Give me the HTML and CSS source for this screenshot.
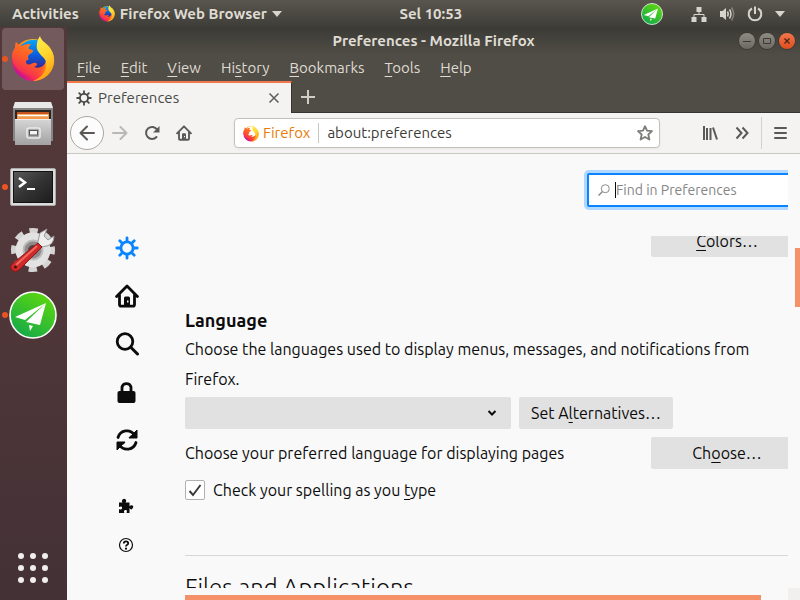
FILE: index.html
```html
<!DOCTYPE html>
<html lang="en">
<head>
<meta charset="utf-8">
<meta name="viewport" content="width=device-width, initial-scale=1">
<title>Preferences - Mozilla Firefox</title>
<link rel="stylesheet" href="styles.css">
</head>
<body>
<svg class="defs" aria-hidden="true">
  <defs>
    <linearGradient id="fx-body" x1="0.85" y1="0.1" x2="0.15" y2="0.85">
      <stop offset="0" stop-color="#ffd93b"/><stop offset="0.3" stop-color="#ffa516"/><stop offset="0.55" stop-color="#ff6a20"/><stop offset="0.8" stop-color="#fb2f4b"/><stop offset="1" stop-color="#c8109a"/>
    </linearGradient>
    <linearGradient id="fx-face" x1="0.7" y1="0" x2="0.1" y2="1">
      <stop offset="0" stop-color="#ff8a16"/><stop offset="0.5" stop-color="#ff5a2a"/><stop offset="1" stop-color="#ee1a66"/>
    </linearGradient>
    <linearGradient id="fx-tail" x1="0.2" y1="0" x2="0.6" y2="1">
      <stop offset="0" stop-color="#fff14f"/><stop offset="0.5" stop-color="#ffd52e"/><stop offset="1" stop-color="#ff9a10"/>
    </linearGradient>
    <linearGradient id="fx-globe" x1="0.5" y1="0" x2="0.5" y2="1">
      <stop offset="0" stop-color="#0aa5f5"/><stop offset="0.5" stop-color="#0a5fe0"/><stop offset="1" stop-color="#3a1d80"/>
    </linearGradient>
    <linearGradient id="plane-bg" x1="0.8" y1="0" x2="0.2" y2="1">
      <stop offset="0" stop-color="#5fd90c"/><stop offset="1" stop-color="#12a84c"/>
    </linearGradient>
    <linearGradient id="metal" x1="0" y1="0" x2="0" y2="1">
      <stop offset="0" stop-color="#d6d6d6"/><stop offset="1" stop-color="#a2a2a2"/>
    </linearGradient>
    <linearGradient id="screen" x1="0" y1="0" x2="1" y2="1">
      <stop offset="0" stop-color="#5a5a5a"/><stop offset="0.5" stop-color="#333"/><stop offset="1" stop-color="#1d1d1d"/>
    </linearGradient>
  </defs>
  <symbol id="firefox" viewBox="0 0 44 46">
    <circle cx="22" cy="24" r="21" fill="url(#fx-body)"/>
    <path class="globe" d="M9 11C13 5 22 2 28 5L35 17C37 25 33 33 24 34C15 35 9 28 8 20Z"/>
    <path d="M5 6C7 8 9 10 11 10C14 8 17 8 20 8C18 10 17 12 18 13C20 14 22 13 22 15C22 17 18 18 17 20C17 22 18 23 17 24C15 24 14 26 16 28C19 30 22 26 25 27C27 28 26 30 23 31C26 33 32 31 34 28C32 38 23 42 14 38C5 34 0 26 1 18C2 15 3 13 4 12C4 10 4 8 5 6Z" fill="url(#fx-face)"/>
    <path d="M29 0C30 4 34 7 38 11C42 16 45 23 42 31C39 40 30 45 22 45C31 42 37 34 35 26C34 21 28 19 26 13C25 8 27 3 29 0Z" fill="url(#fx-tail)"/>
  </symbol>
  <symbol id="plane" viewBox="0 0 48 48">
    <circle cx="24" cy="24" r="23" fill="url(#plane-bg)" stroke="#fff" stroke-width="1.6"/>
    <path d="M37 12L6 26L16 29ZM37 12L17 31L31 34ZM20 34L24 35L21 40Z" fill="#fff"/>
  </symbol>
  <symbol id="gear" viewBox="0 0 24 24">
    <g fill="none" stroke="currentColor" stroke-linecap="round">
      <circle cx="12" cy="12" r="6.1" stroke-width="2.8"/>
      <path stroke-width="2.8" d="M12 1.8V5M12 19V22.2M1.8 12H5M19 12H22.2M4.8 4.8L7 7M17 17L19.2 19.2M19.2 4.8L17 7M7 17L4.8 19.2"/>
    </g>
  </symbol>
  <symbol id="home" viewBox="0 0 24 24">
    <g fill="none" stroke="currentColor" stroke-width="2.8" stroke-linecap="round" stroke-linejoin="round">
      <path d="M1.6 12.5L12 2L22.4 12.5M4.5 11V20.5Q4.5 22.2 6.2 22.2H17.8Q19.5 22.2 19.5 20.5V11"/>
    </g>
    <path fill="currentColor" fill-rule="evenodd" d="M9 22V14Q9 12.5 10.500 12.500H13.500Q15 12.500 15 14V22ZM12 16.500V18.500H13.500V16.500Z"/>
  </symbol>
</svg>

<header class="topbar">
  <div class="topbar-left">
    <button type="button" class="plain">Activities</button>
    <button type="button" class="plain app-menu">
      <svg class="logo-small" aria-hidden="true"><use href="#firefox"/></svg>
      <span>Firefox Web Browser</span>
      <svg width="10" height="6" viewBox="0 0 10 6" aria-hidden="true"><path d="M0 0H10L5 6Z" fill="#d6d4ce"/></svg>
    </button>
  </div>
  <time class="clock">Sel 10:53</time>
  <div class="tray">
    <svg class="tray-plane" width="22" height="22" role="img" aria-label="Messages"><use href="#plane"/></svg>
    <svg width="16" height="16" viewBox="0 0 16 16" role="img" aria-label="Network"><path d="M5.500 1H10.500V6H5.500ZM0.500 11H5.500V16H0.500ZM10.500 11H15.500V16H10.500Z" fill="#d6d4ce"/><path d="M8 6V8.500M3 11V8.500H13V11" fill="none" stroke="#d6d4ce"/></svg>
    <svg width="16" height="16" viewBox="0 0 16 16" role="img" aria-label="Volume"><path d="M1 5H3.500L7 2V14L3.500 11H1Z" fill="#d6d4ce"/><g fill="none" stroke="#d6d4ce" stroke-width="1.500"><path d="M8.500 5.500Q10 8 8.500 10.500"/><path d="M10.500 3.500Q13.500 8 10.500 12.500"/><path d="M12.500 1.500Q17 8 12.500 14.500" opacity=".4"/></g></svg>
    <svg width="16" height="16" viewBox="0 0 16 16" role="img" aria-label="Power"><path d="M5 2.500A6.300 6.300 0 1 0 11 2.500M8 0.500V8" fill="none" stroke="#d6d4ce" stroke-width="2"/></svg>
    <svg width="10" height="6" viewBox="0 0 10 6" aria-hidden="true"><path d="M0 0H10L5 6Z" fill="#d6d4ce"/></svg>
  </div>
</header>

<div class="desktop">
  <nav class="dock" aria-label="Launcher">
    <button type="button" class="dock-item active running" aria-label="Firefox"><svg width="44" height="46"><use href="#firefox"/></svg></button>
    <button type="button" class="dock-item" aria-label="Files">
      <svg width="44" height="46" viewBox="0 0 44 46">
        <path d="M4 2H40L42 8V41H2V8Z" fill="#858585"/><path d="M4 2H40L42 8H2Z" fill="#e8e8e8"/><path d="M4 10H40V21H4Z" fill="#2a2624"/>
        <path d="M6 12H38V20H6Z" fill="#c6541c"/><path d="M6 14H38V20H6Z" fill="#f49a4a"/><path d="M7 15.500H37" stroke="#fff" stroke-width="1.500"/>
        <path d="M4 19H40V45H4Z" fill="url(#metal)"/><path d="M4 19.500H40" stroke="#efefef"/>
        <rect x="16" y="28" width="13" height="10" rx="2" fill="#aaa" stroke="#ececec" stroke-width="1.500"/><rect x="18.500" y="30.500" width="8" height="4.500" fill="#f5f5f5" stroke="#555"/>
      </svg>
    </button>
    <button type="button" class="dock-item running" aria-label="Terminal">
      <svg width="46" height="38" viewBox="0 0 46 38">
        <rect x="0.500" y="0.500" width="45" height="37" rx="1.500" fill="#dcdcdc" stroke="#a9a9a9"/><rect x="3.500" y="3.500" width="39" height="31" fill="url(#screen)" stroke="#111"/>
        <path d="M9 10L15 14.500L9 19" fill="none" stroke="#fff" stroke-width="2.500"/><path d="M17 21H25" stroke="#fff" stroke-width="2"/>
      </svg>
    </button>
    <button type="button" class="dock-item" aria-label="Settings">
      <svg width="46" height="46" viewBox="0 0 46 46">
        <circle cx="23" cy="22" r="18.500" fill="none" stroke="#d4d4d4" stroke-width="7" stroke-dasharray="8 6.530" stroke-dashoffset="4"/>
        <circle cx="23" cy="22" r="13" fill="none" stroke="#e2e2e2" stroke-width="9"/><circle cx="23" cy="22" r="9.500" fill="#8f8a8a" stroke="#bcbcbc" stroke-width="2"/><circle cx="23" cy="22" r="5" fill="#574448"/>
        <path d="M28 13L30 5L37 1L34 8L38 12L44 8Q44 16 37 18L31 19L28 16Z" fill="#eee" stroke="#999"/>
        <path d="M28 15L32 19L9 42Q5 45 2 42T2 36Z" fill="#d02a2a" stroke="#8f1616"/><path d="M27 18L6 37" stroke="#ee6a62" stroke-width="2"/><circle cx="5.500" cy="39" r="1.500" fill="#4a1010"/>
      </svg>
    </button>
    <button type="button" class="dock-item running" aria-label="Messages"><svg width="48" height="48"><use href="#plane"/></svg></button>
    <button type="button" class="dock-item show-apps" aria-label="Show applications">
      <svg width="30" height="30" viewBox="0 0 30 30" fill="#f0eeee"><circle cx="3" cy="3" r="3"/><circle cx="15" cy="3" r="3"/><circle cx="27" cy="3" r="3"/><circle cx="3" cy="15" r="3"/><circle cx="15" cy="15" r="3"/><circle cx="27" cy="15" r="3"/><circle cx="3" cy="27" r="3"/><circle cx="15" cy="27" r="3"/><circle cx="27" cy="27" r="3"/></svg>
    </button>
  </nav>

  <div class="window">
    <div class="titlebar">
      <h1 class="window-title">Preferences - Mozilla Firefox</h1>
      <div class="controls">
        <button type="button" class="control" aria-label="Minimize"><svg width="16" height="16"><path d="M4 8.500H12" stroke="#3b3a36"/></svg></button>
        <button type="button" class="control" aria-label="Maximize"><svg width="16" height="16"><path d="M4.500 5.500H11.500V10.500H4.500Z" fill="none" stroke="#3b3a36"/></svg></button>
        <button type="button" class="control close" aria-label="Close"><svg width="16" height="16"><path d="M5.500 5.500L10.500 10.500M10.500 5.500L5.500 10.500" stroke="#4a2415" stroke-width="1.300"/></svg></button>
      </div>
    </div>

    <div class="menubar">
      <button type="button" class="plain"><u>F</u>ile</button>
      <button type="button" class="plain"><u>E</u>dit</button>
      <button type="button" class="plain"><u>V</u>iew</button>
      <button type="button" class="plain">Hi<u>s</u>tory</button>
      <button type="button" class="plain"><u>B</u>ookmarks</button>
      <button type="button" class="plain"><u>T</u>ools</button>
      <button type="button" class="plain"><u>H</u>elp</button>
    </div>

    <div class="tabs">
      <div class="tab">
        <svg width="16" height="16" aria-hidden="true"><use href="#gear"/></svg>
        <span class="tab-label">Preferences</span>
        <button type="button" class="plain tab-close" aria-label="Close tab"><svg width="12" height="12"><path d="M1.500 1.500L10.500 10.500M10.500 1.500L1.500 10.500" stroke="#5e5d59" stroke-width="1.500"/></svg></button>
      </div>
      <button type="button" class="plain new-tab" aria-label="New tab"><svg width="14" height="14"><path d="M7 0V14M0 7H14" stroke="#d0cdc6" stroke-width="2"/></svg></button>
    </div>

    <div class="toolbar">
      <button type="button" class="tool back" aria-label="Back"><svg width="16" height="16"><path d="M15 8H2M8 1.500L1.500 8L8 14.500" fill="none" stroke="currentColor" stroke-width="2" stroke-linecap="round" stroke-linejoin="round"/></svg></button>
      <button type="button" class="tool forward" aria-label="Forward" disabled><svg width="16" height="16"><path d="M1 8H14M8.500 2L14.500 8L8.500 14" fill="none" stroke="currentColor" stroke-width="2" stroke-linecap="round" stroke-linejoin="round"/></svg></button>
      <button type="button" class="tool" aria-label="Reload"><svg width="16" height="16"><path d="M12.500 12A6 6 0 1 1 13 4.500" fill="none" stroke="currentColor" stroke-width="2" stroke-linecap="round"/><path d="M15.500 1V7.500H9Z" fill="currentColor"/></svg></button>
      <button type="button" class="tool" aria-label="Home"><svg width="16" height="16"><use href="#home"/></svg></button>
      <div class="urlbar">
        <button type="button" class="plain identity"><svg class="logo-small flat" aria-hidden="true"><use href="#firefox"/></svg><span>Firefox</span></button>
        <input class="url" type="text" value="about:preferences" aria-label="Address">
        <button type="button" class="plain star" aria-label="Bookmark this page"><svg width="16" height="16"><path d="M8 1.200L10 5.700L15 6.200L11.300 9.500L12.400 14.500L8 12L3.600 14.500L4.700 9.500L1 6.200L6 5.700Z" fill="none" stroke="#7c7b77" stroke-width="1.800" stroke-linejoin="round"/></svg></button>
      </div>
      <button type="button" class="tool" aria-label="Library"><svg width="16" height="16"><path d="M2 1V15M5 3V15M8.500 3V15M11 2.500L15 14.500" fill="none" stroke="currentColor" stroke-width="2"/></svg></button>
      <button type="button" class="tool" aria-label="More tools"><svg width="16" height="16"><path d="M2.500 2.500L7.500 8L2.500 13.500M8.500 2.500L13.500 8L8.500 13.500" fill="none" stroke="currentColor" stroke-width="2"/></svg></button>
      <button type="button" class="tool menu" aria-label="Open menu"><svg width="14" height="14"><path d="M2 2H13M2 7H13M2 12H13" stroke="currentColor" stroke-width="2" stroke-linecap="round"/></svg></button>
    </div>

    <div class="page">
      <nav class="categories" aria-label="Categories">
        <a href="#general" class="category selected" aria-label="General"><svg width="24" height="24"><use href="#gear"/></svg></a>
        <a href="#home-page" class="category" aria-label="Home"><svg width="24" height="24"><use href="#home"/></svg></a>
        <a href="#search" class="category" aria-label="Search"><svg width="24" height="24"><circle cx="10" cy="9.500" r="7.800" fill="none" stroke="currentColor" stroke-width="2.800"/><path d="M16 15.500L22.500 22" stroke="currentColor" stroke-width="3" stroke-linecap="round"/></svg></a>
        <a href="#privacy" class="category" aria-label="Privacy"><svg width="24" height="24"><path d="M7 12V7A4.700 4.700 0 0 1 16 7V12" fill="none" stroke="currentColor" stroke-width="2.800"/><rect x="2.500" y="11" width="18" height="12" rx="2" fill="currentColor"/></svg></a>
        <a href="#sync" class="category" aria-label="Sync"><svg width="24" height="24"><path d="M3 9.500A9.200 9.200 0 0 1 19.500 7M21 14.500A9.200 9.200 0 0 1 4.500 17" fill="none" stroke="currentColor" stroke-width="2.800" stroke-linecap="round"/><path d="M22 2V10H14Q14.500 8.500 16.500 7.500ZM2 22V14H10Q9.500 15.500 7.500 16.500Z" fill="currentColor" stroke="currentColor" stroke-linejoin="round"/></svg></a>
        <div class="category-footer">
          <a href="#addons" class="category" aria-label="Add-ons"><svg width="16" height="16"><path d="M1 4.500H4.500Q3.700 3.500 4 2.500Q4.500 0.800 6.200 0.800T8.200 2.500Q8.200 3.800 7.500 4.500H11.500V8.300Q13 6.500 14.500 7.500T14.500 10.500T11.500 10V15H8.500Q9.500 12.500 8.200 12Q6.500 11.500 6 13Q5.800 14 6.500 15H1V11Q3 12.200 4 10.800Q4.500 9 3.200 8.500Q2 8.200 1 9Z" fill="currentColor"/></svg></a>
          <a href="#help" class="category" aria-label="Help"><svg width="16" height="16"><circle cx="8" cy="8" r="6.500" fill="none" stroke="currentColor" stroke-width="1.200"/><path d="M5.800 6.500Q5.800 4.300 8 4.300T10.200 6.300Q10.200 7.300 8.900 8Q8 8.500 8 9.500" fill="none" stroke="currentColor" stroke-width="1.800"/><circle cx="8" cy="11.700" r="1.100" fill="currentColor"/></svg></a>
        </div>
      </nav>

      <main class="pane">
        <div class="find-row">
          <label class="find">
            <svg width="12" height="12" aria-hidden="true"><circle cx="7.300" cy="4.700" r="4" fill="none" stroke="#8a8a8a"/><path d="M4.500 7.500L0.500 11.500" stroke="#8a8a8a" stroke-width="1.500"/></svg>
            <span class="caret"></span>
            <input type="search" placeholder="Find in Preferences" aria-label="Find in Preferences">
          </label>
        </div>
        <div class="viewport">
          <div class="settings">
            <div class="row end"><button type="button" class="button wide"><span><u>C</u>olors…</span></button></div>
            <section class="group">
              <h2 class="group-title">Language</h2>
              <p class="text">Choose the languages used to display menus, messages, and notifications from Firefox.</p>
              <div class="row">
                <span class="dropdown">
                  <select aria-label="Display language"><option></option></select>
                  <svg width="10" height="8" aria-hidden="true"><path d="M1.500 2L5 5.500L8.500 2" fill="none" stroke="#0c0c0d" stroke-width="2"/></svg>
                </span>
                <button type="button" class="button"><span>Set A<u>l</u>ternatives…</span></button>
              </div>
              <div class="row between">
                <p class="text">Choose your preferred language for displaying pages</p>
                <button type="button" class="button wide"><span>Ch<u>o</u>ose…</span></button>
              </div>
              <label class="check">
                <span class="tick"><input type="checkbox" checked><svg width="20" height="20" aria-hidden="true"><path d="M4.500 11L8 15L15.500 5" fill="none" stroke="#3b3b3b" stroke-width="2"/></svg></span>
                <span>Check your spelling as you <u>t</u>ype</span>
              </label>
            </section>
            <hr class="rule">
            <h2 class="section-title">Files and Applications</h2>
          </div>
        </div>
        <div class="hscroll"><div class="thumb"></div></div>
      </main>
      <div class="vscroll"><div class="thumb"></div><div class="corner"></div></div>
    </div>
  </div>
</div>
</body>
</html>
```

FILE: styles.css
```css
* {
  box-sizing: border-box;
}

body {
  margin: 0;
  height: 100vh;
  display: flex;
  flex-direction: column;
  overflow: hidden;
  font: 15px/20px Ubuntu, "Noto Sans", sans-serif;
  color: #0c0c0d;
}

button,
input,
select {
  font: inherit;
  color: inherit;
  margin: 0;
}

button {
  padding: 0;
  border: 0;
}

svg {
  display: block;
  flex: none;
}

u {
  text-decoration-thickness: 1px;
  text-underline-offset: 3px;
  text-decoration-skip-ink: none;
}

.defs {
  position: absolute;
  width: 0;
  height: 0;
}

.plain {
  background: none;
}

.globe {
  fill: var(--globe, url(#fx-globe));
}

.logo-small {
  width: 16px;
  height: 17px;
}

/* System bar */
.topbar {
  flex: none;
  height: 27px;
  display: grid;
  grid-template-columns: 6fr auto 5fr;
  align-items: center;
  padding: 0 15px 0 12px;
  background: linear-gradient(#5a564e, #3e3d38);
  color: #dfdbd2;
  font-weight: 600;
}

.topbar-left,
.app-menu {
  display: flex;
  align-items: center;
}

.topbar-left {
  gap: 20px;
}

.app-menu {
  gap: 5px;
}

.tray {
  display: flex;
  align-items: center;
  justify-content: flex-end;
  gap: 12px;
}

.tray-plane {
  margin-right: 16px;
}

.desktop {
  flex: 1;
  min-height: 0;
  display: flex;
}

/* Launcher */
.dock {
  width: 67px;
  flex: none;
  display: flex;
  flex-direction: column;
  gap: 2px;
  padding: 1px 3px 1px 2px;
  background: linear-gradient(#543839, #503739 45%, #433136);
}

.dock-item {
  position: relative;
  height: 62px;
  display: grid;
  place-items: center;
  background: none;
  border-radius: 4px;
}

.dock-item.active {
  background: #735b5d;
}

.dock-item.running::before {
  content: "";
  position: absolute;
  left: 0;
  top: 28px;
  width: 6px;
  height: 6px;
  border-radius: 50%;
  background: #e95420;
}

.show-apps {
  margin-top: auto;
}

/* Window frame */
.window {
  flex: 1;
  min-width: 0;
  display: flex;
  flex-direction: column;
  background: #504d46;
  color: #dfdbd2;
}

.titlebar {
  flex: none;
  height: 28px;
  display: grid;
  grid-template-columns: 1fr auto 1fr;
  align-items: center;
  padding: 0 5px;
  background: linear-gradient(#3b3a35, #504d46);
}

.window-title {
  grid-column: 2;
  margin: 0;
  font-size: 15px;
  font-weight: 600;
}

.controls {
  display: flex;
  justify-content: flex-end;
  gap: 4px;
}

.control {
  width: 16px;
  height: 16px;
  border-radius: 50%;
  background: linear-gradient(#8f8c84, #6b6962);
  box-shadow: 0 0 0 1px #3b3a36;
}

.control.close {
  background: linear-gradient(#f5764d, #dc4d1d);
}

.menubar {
  flex: none;
  height: 26px;
  display: flex;
  align-items: center;
  gap: 20px;
  padding: 0 10px;
}

.tabs {
  flex: none;
  height: 32px;
  display: flex;
  box-shadow: inset 0 -1px #37352f;
}

.tab {
  width: 225px;
  display: flex;
  align-items: center;
  gap: 6px;
  padding: 0 11px 0 9px;
  border-top: 2px solid #f0764b;
  border-right: 1px solid #37352f;
  background: #f4f3f2;
  color: #4a4a46;
}

.tab-label {
  flex: 1;
}

.new-tab {
  width: 32px;
  display: grid;
  place-items: center;
}

.toolbar {
  flex: none;
  height: 41px;
  display: flex;
  align-items: center;
  padding: 0 3px;
  border-bottom: 1px solid #c9c7c3;
  background: #f4f3f2;
  color: #5a5955;
}

.tool {
  width: 32px;
  height: 32px;
  display: grid;
  place-items: center;
  background: none;
}

.tool.back {
  width: 34px;
  height: 34px;
  border: 1px solid #a9a7a2;
  border-radius: 50%;
  background: #fcfcfc;
}

.tool.forward {
  color: #bab8b4;
}

.tool.menu {
  width: 36px;
  margin-left: 3px;
  border-left: 1px solid #d3d1cd;
}

.urlbar {
  flex: 1;
  min-width: 0;
  height: 30px;
  margin: 0 34px;
  display: flex;
  align-items: center;
  padding: 0 6px 0 8px;
  border: 1px solid #c4c1bb;
  border-radius: 4px;
  background: #fff;
  box-shadow: 0 1px 3px #0000000d;
}

.identity {
  display: flex;
  align-items: center;
  gap: 4px;
  padding-right: 8px;
  border-right: 1px solid #c9c7c3;
  color: #e87b06;
}

.flat {
  --globe: #fff;
}

.url {
  flex: 1;
  min-width: 0;
  padding: 0 8px;
  border: 0;
  background: none;
  color: #3b3b38;
}

/* Preferences page */
.page {
  flex: 1;
  min-height: 0;
  display: flex;
  background: #f9f9fa;
  color: #0c0c0d;
}

.categories {
  width: 118px;
  flex: none;
  display: flex;
  flex-direction: column;
  padding: 70px 0 36px 2px;
}

.category {
  height: 48px;
  display: grid;
  place-items: center;
  color: #0c0c0d;
}

.category.selected {
  color: #0a84ff;
}

.category-footer {
  margin-top: auto;
  padding-right: 2px;
}

.category-footer .category {
  height: 39px;
}

.pane {
  flex: 1;
  min-width: 0;
  display: flex;
  flex-direction: column;
  font-size: 16px;
}

.find-row {
  flex: none;
  display: flex;
  justify-content: flex-end;
  overflow: hidden;
  padding: 19px 0 29px;
}

.find {
  width: 216px;
  height: 34px;
  margin-right: -15px;
  display: flex;
  align-items: center;
  padding: 0 9px;
  border: 2px solid #0a84ff;
  border-radius: 2px;
  background: #fff;
  box-shadow: 0 0 0 3px #b0d7ff;
  font-size: 14px;
}

.caret {
  flex: none;
  width: 1px;
  height: 16px;
  margin-left: 5px;
  background: #0c0c0d;
}

.find input {
  flex: 1;
  min-width: 0;
  padding: 0;
  border: 0;
  background: none;
}

.find input::placeholder {
  color: #858585;
}

.viewport {
  flex: 1;
  min-height: 0;
  overflow: hidden;
}

.settings {
  width: calc(100% + 15px);
  margin-top: -11px;
}

.row {
  display: flex;
  align-items: center;
  gap: 8px;
  margin-bottom: 8px;
}

.row.end {
  justify-content: flex-end;
}

.row.between {
  justify-content: space-between;
}

.button {
  height: 32px;
  padding: 0 12px;
  border-radius: 2px;
  background: #e1e1e1;
}

.wide {
  width: 152px;
}

.group {
  padding-top: 41px;
}

.group-title {
  margin: 0;
  font-size: 18px;
  line-height: 28px;
  font-weight: 600;
}

.text {
  margin: 0;
  padding-right: 15px;
  line-height: 30px;
}

.group > .text {
  margin-bottom: 3px;
}

.dropdown {
  width: 326px;
  height: 32px;
  display: grid;
  align-items: center;
  border-radius: 2px;
  background: #e1e1e1;
}

.dropdown > * {
  grid-area: 1 / 1;
}

.dropdown select {
  width: 100%;
  height: 100%;
  appearance: none;
  border: 0;
  background: none;
}

.dropdown svg {
  justify-self: end;
  margin-right: 14px;
  pointer-events: none;
}

.check {
  display: flex;
  align-items: center;
  gap: 8px;
  padding-top: 3px;
}

.tick {
  display: grid;
}

.tick > * {
  grid-area: 1 / 1;
}

.tick input {
  width: 20px;
  height: 20px;
  appearance: none;
  border: 1px solid #b1b1b1;
  border-radius: 2px;
  background: #fff;
}

.tick svg {
  position: relative;
  pointer-events: none;
}

.rule {
  margin: 55px 0 16px;
  border: 0;
  border-top: 1px solid #d7d7db;
}

.section-title {
  margin: 0;
  font: 300 24px/32px Ubuntu, "Open Sans", sans-serif;
}

/* Scroll bars */
.hscroll {
  flex: none;
  height: 12px;
  padding-top: 7px;
}

.hscroll .thumb {
  width: 576px;
  max-width: 100%;
  height: 5px;
}

.thumb {
  background: #f49169;
}

.vscroll {
  width: 12px;
  flex: none;
  display: flex;
  flex-direction: column;
  padding-top: 94px;
}

.vscroll .thumb {
  width: 5px;
  height: 59px;
  margin-left: auto;
}

.corner {
  height: 12px;
  margin-top: auto;
  background: #f1f0ef;
}
```
